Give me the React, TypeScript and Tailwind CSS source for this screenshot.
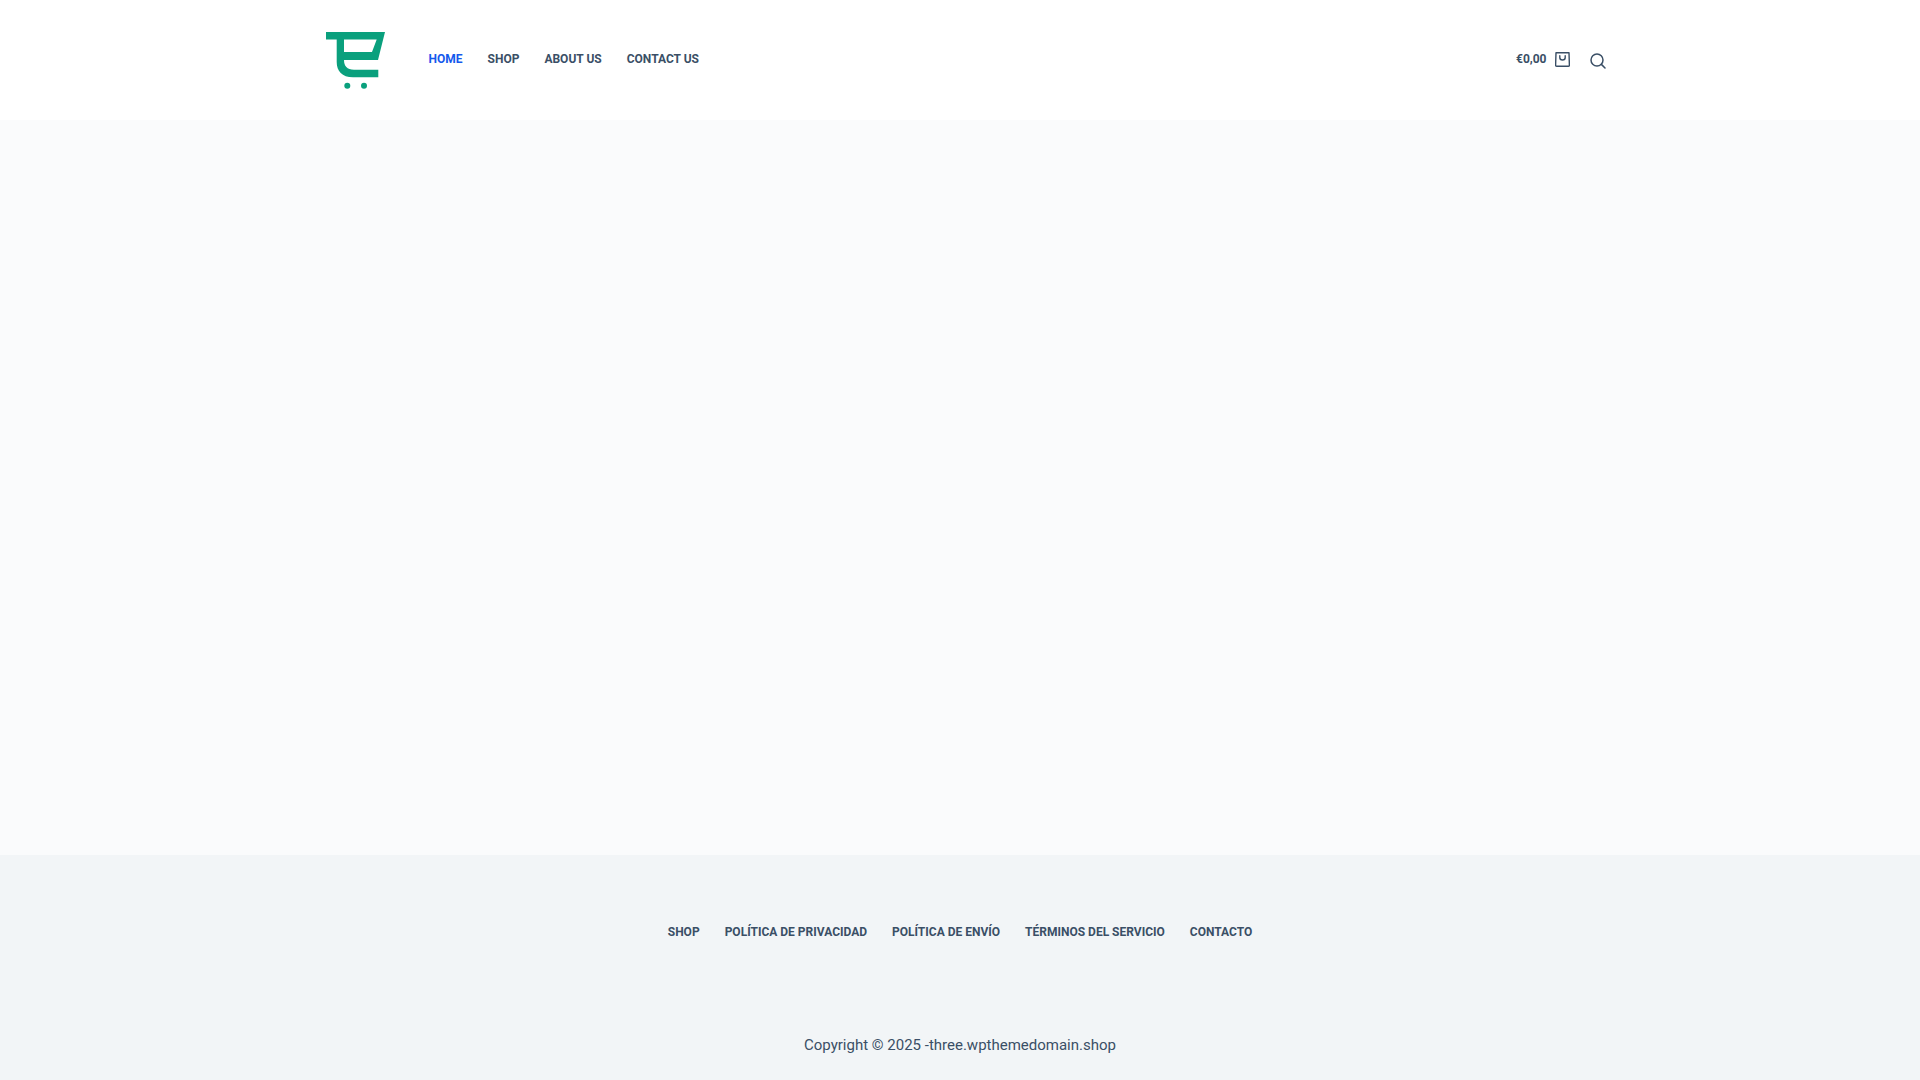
export default function App() {
  const font = { fontFamily: "Roboto, sans-serif" };
  return (
    <div style={font} className="min-h-screen flex flex-col bg-[#fafbfc] text-[#3a4f66]">
      <header className="h-[120px] bg-white">
        <div className="w-[1292px] h-full mx-auto flex items-center">
          <a className="ml-[12px] mr-[43.5px] mt-[1px] block">
            <svg width="59" height="57" viewBox="0 0 59 57" className="block">
              <path fill="#0aa07d" fillRule="evenodd" d="M0 0H59L52 28H18C18 34 21 37.7 28 37.7H52.3V45.3H27C16 45.3 10.7 39 10.7 30V7.5H0ZM18 7.5V20H46L50.7 7.5Z" />
              <circle cx="21.3" cy="53.7" r="3" fill="#0aa07d" />
              <circle cx="38" cy="53.7" r="3" fill="#0aa07d" />
            </svg>
          </a>
          <nav className="flex gap-[25px] text-[12px] font-bold uppercase leading-[20px] -mt-[2px]">
            <a className="text-[#1559ed]">Home</a>
            <a>Shop</a>
            <a>About Us</a>
            <a>Contact Us</a>
          </nav>
          <div className="ml-auto flex items-center">
            <span className="text-[12px] font-bold leading-[20px] -mt-[2px] mr-[8.5px]">€0,00</span>
            <svg width="15" height="15" viewBox="0 0 15 15" fill="none" stroke="currentColor" strokeWidth="1.4" className="block mr-[20px] -mt-[1px]">
              <path d="M1 .8H14L14.4 13.2Q14.4 14.3 13.3 14.3H1.7Q.6 14.3 .6 13.2Z" strokeLinejoin="round" />
              <path d="M4.8 3.8V5.5Q4.8 8 7.5 8T10.2 5.5V3.8" strokeLinecap="round" />
            </svg>
            <svg width="16" height="16" viewBox="0 0 16 16" fill="none" stroke="currentColor" strokeWidth="1.5" className="block mt-[1px]">
              <circle cx="7" cy="7" r="6" />
              <path d="M11.4 11.4L15 15" strokeLinecap="round" />
            </svg>
          </div>
        </div>
      </header>
      <main className="h-[735px] bg-[#fafbfc]" />
      <footer className="h-[225px] bg-[#f2f5f7] flex flex-col items-center">
        <nav className="mt-[67px] flex gap-[25px] text-[12px] font-bold uppercase leading-[20px]">
          <a>Shop</a>
          <a>Política de privacidad</a>
          <a>Política de envío</a>
          <a>Términos del servicio</a>
          <a>Contacto</a>
        </nav>
        <p className="mt-[91px] text-[15px] leading-[24px]">Copyright © 2025 -three.wpthemedomain.shop</p>
      </footer>
    </div>
  );
}
